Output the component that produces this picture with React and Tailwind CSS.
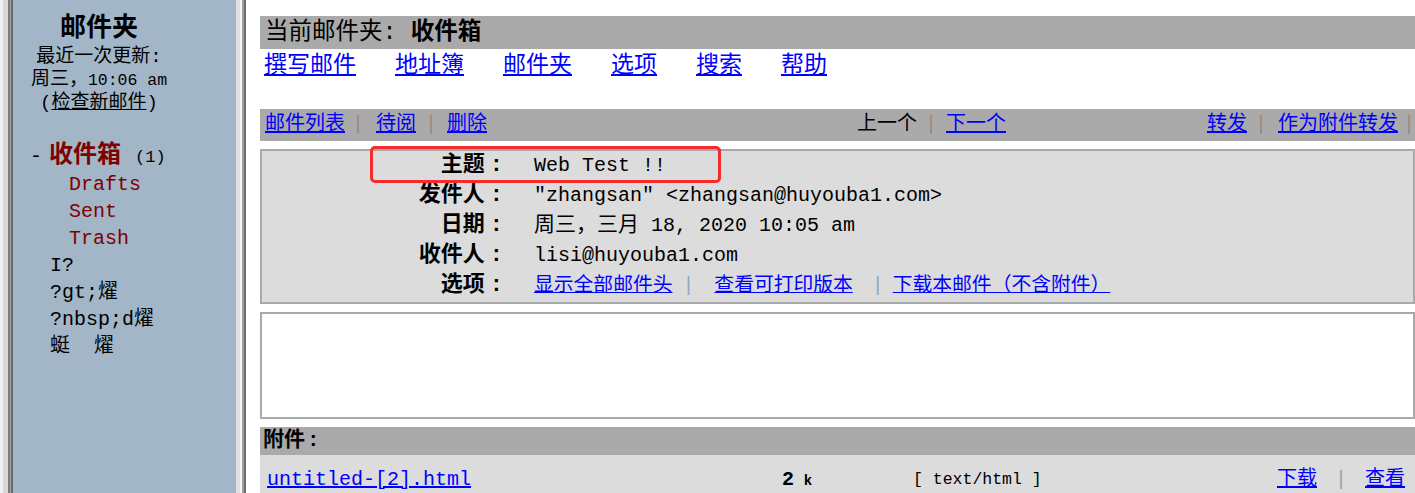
import React from "react";

const Sep = ({ c = "text-[#a08878]", cls = "" }) => (
  <span className={`${c} ${cls}`}>|</span>
);

const Label = ({ children }) => (
  <div className="text-right text-[22px] font-bold">
    {children}
    <span className="pl-[5px]">:</span>
  </div>
);

export default function App() {
  return (
    <div className="relative flex h-[493px] w-[1415px] overflow-hidden bg-white font-['Liberation_Mono','Noto_Sans_CJK_SC',monospace] text-black">
      {/* left frame edge */}
      <div className="flex shrink-0">
        <div className="w-[3px] bg-[#f2f2f2]" />
        <div className="w-[5px] bg-[#d9d9d9]" />
        <div className="w-[2px] bg-[#7c7c7c]" />
        <div className="w-[1px] bg-[#a6a6a6]" />
        <div className="w-[2px] bg-[#6a6a6a]" />
      </div>

      {/* sidebar */}
      <div className="w-[223px] shrink-0 bg-[#a2b6c7]">
        <div className="w-[172px] pt-[13px] text-center">
          <div className="text-[26px] font-bold leading-[33px]">邮件夹</div>
          <div className="text-[19px] leading-[23px]">最近一次更新:</div>
          <div className="text-[19px] leading-[23px]">
            周三，<span className="text-[16.5px]">10:06 am</span>
          </div>
          <div className="text-[19px] leading-[23px]">
            (<span className="underline">检查新邮件</span>)
          </div>
        </div>
        <div className="mt-[27px] pl-[17px] text-[20px] leading-[27px]">
          <div className="flex items-baseline">
            <span>-</span>
            <span className="ml-[7px] text-[24px] font-bold text-[#800000]">收件箱</span>
            <span className="ml-[14px] text-[17px]">(1)</span>
          </div>
          <div className="pl-[39px] text-[#800000]">Drafts</div>
          <div className="pl-[39px] text-[#800000]">Sent</div>
          <div className="pl-[39px] text-[#800000]">Trash</div>
          <div className="pl-[20px]">I?</div>
          <div className="pl-[20px]">?gt;燿</div>
          <div className="pl-[20px]">?nbsp;d燿</div>
          <div className="whitespace-pre pl-[20px]">蜓  燿</div>
        </div>
      </div>

      {/* right frame edge */}
      <div className="flex shrink-0">
        <div className="w-[4px] bg-[#e2e2e2]" />
        <div className="w-[2px] bg-[#f6f6f6]" />
        <div className="w-[2px] bg-[#a0a0a0]" />
        <div className="w-[2px] bg-[#6a6a6a]" />
      </div>

      {/* main */}
      <div className="min-w-0 flex-1 pl-[14px] pt-[16px]">
        <div className="h-[33px] whitespace-pre bg-[#aaaaaa] pl-[5px] text-[23.5px] leading-[33px]">
          当前邮件夹: <span className="font-bold">收件箱</span>
        </div>
        <div className="flex h-[34px] items-center gap-[39px] pl-[4px] text-[23px] text-[#0000ff]">
          <a className="underline">撰写邮件</a>
          <a className="underline">地址簿</a>
          <a className="underline">邮件夹</a>
          <a className="underline">选项</a>
          <a className="underline">搜索</a>
          <a className="underline">帮助</a>
        </div>

        {/* toolbar */}
        <div className="mt-[26px] flex h-[32px] items-center bg-[#aaaaaa] pl-[5px] text-[20px]">
          <div className="flex w-[592px] items-center">
            <a className="text-[#0000ff] underline">邮件列表</a>
            <Sep cls="ml-[7px] mr-[12px]" />
            <a className="text-[#0000ff] underline">待阅</a>
            <Sep cls="ml-[9px] mr-[10px]" />
            <a className="text-[#0000ff] underline">删除</a>
          </div>
          <div className="flex items-center">
            <span>上一个</span>
            <Sep cls="ml-[8px] mr-[9px]" />
            <a className="text-[#0000ff] underline">下一个</a>
          </div>
          <div className="ml-auto flex items-center">
            <a className="text-[#0000ff] underline">转发</a>
            <Sep cls="ml-[8px] mr-[11px]" />
            <a className="text-[#0000ff] underline">作为附件转发</a>
            <Sep cls="ml-[5px]" />
          </div>
        </div>

        {/* headers box */}
        <div className="mt-[8px] h-[155px] border-2 border-[#a9a9a9] bg-[#dcdcdc]">
          <div className="grid grid-cols-[241px_1fr] leading-[30px]">
            <Label>主题</Label>
            <div className="pl-[31px] text-[20px]">Web Test !!</div>
            <Label>发件人</Label>
            <div className="pl-[31px] text-[20px]">"zhangsan" &lt;zhangsan@huyouba1.com&gt;</div>
            <Label>日期</Label>
            <div className="pl-[31px] text-[20px]">
              <span className="text-[21px]">周三，三月</span> 18, 2020 10:05 am
            </div>
            <Label>收件人</Label>
            <div className="pl-[31px] text-[20px]">lisi@huyouba1.com</div>
            <Label>选项</Label>
            <div className="flex items-center pl-[31px] text-[19.8px]">
              <a className="text-[#0000ff] underline">显示全部邮件头</a>
              <Sep c="text-[#8ea8c0]" cls="ml-[10px] mr-[20px]" />
              <a className="text-[#0000ff] underline">查看可打印版本</a>
              <Sep c="text-[#8ea8c0]" cls="ml-[19px] mr-[9px]" />
              <a className="text-[#0000ff] underline">下载本邮件（不含附件）</a>
            </div>
          </div>
        </div>

        {/* body */}
        <div className="mt-[8px] h-[107px] border-2 border-[#a9a9a9] bg-white" />

        {/* attachments */}
        <div className="mt-[8px] flex h-[28px] items-center bg-[#aaaaaa] pl-[3px] text-[21px] font-bold">
          附件<span className="pl-[2px]">:</span>
        </div>
        <div className="flex h-[50px] items-center bg-[#dcdcdc] pl-[7px] pr-[10px]">
          <a className="w-[515px] shrink-0 text-[20px] text-[#0000ff] underline">untitled-[2].html</a>
          <span className="w-[131px] shrink-0 font-bold">
            <span className="text-[20px]">2</span> <span className="text-[14px]">k</span>
          </span>
          <span className="text-[16.5px]">[ text/html ]</span>
          <div className="ml-auto flex items-center text-[20px]">
            <a className="text-[#0000ff] underline">下载</a>
            <Sep c="text-[#a0a0a0]" cls="mx-[18px]" />
            <a className="text-[#0000ff] underline">查看</a>
          </div>
        </div>
      </div>

      {/* annotation highlight */}
      <div className="pointer-events-none absolute left-[370px] top-[146px] h-[37px] w-[351px] rounded-[5px] border-[3px] border-[#f52a2a]" />
    </div>
  );
}
